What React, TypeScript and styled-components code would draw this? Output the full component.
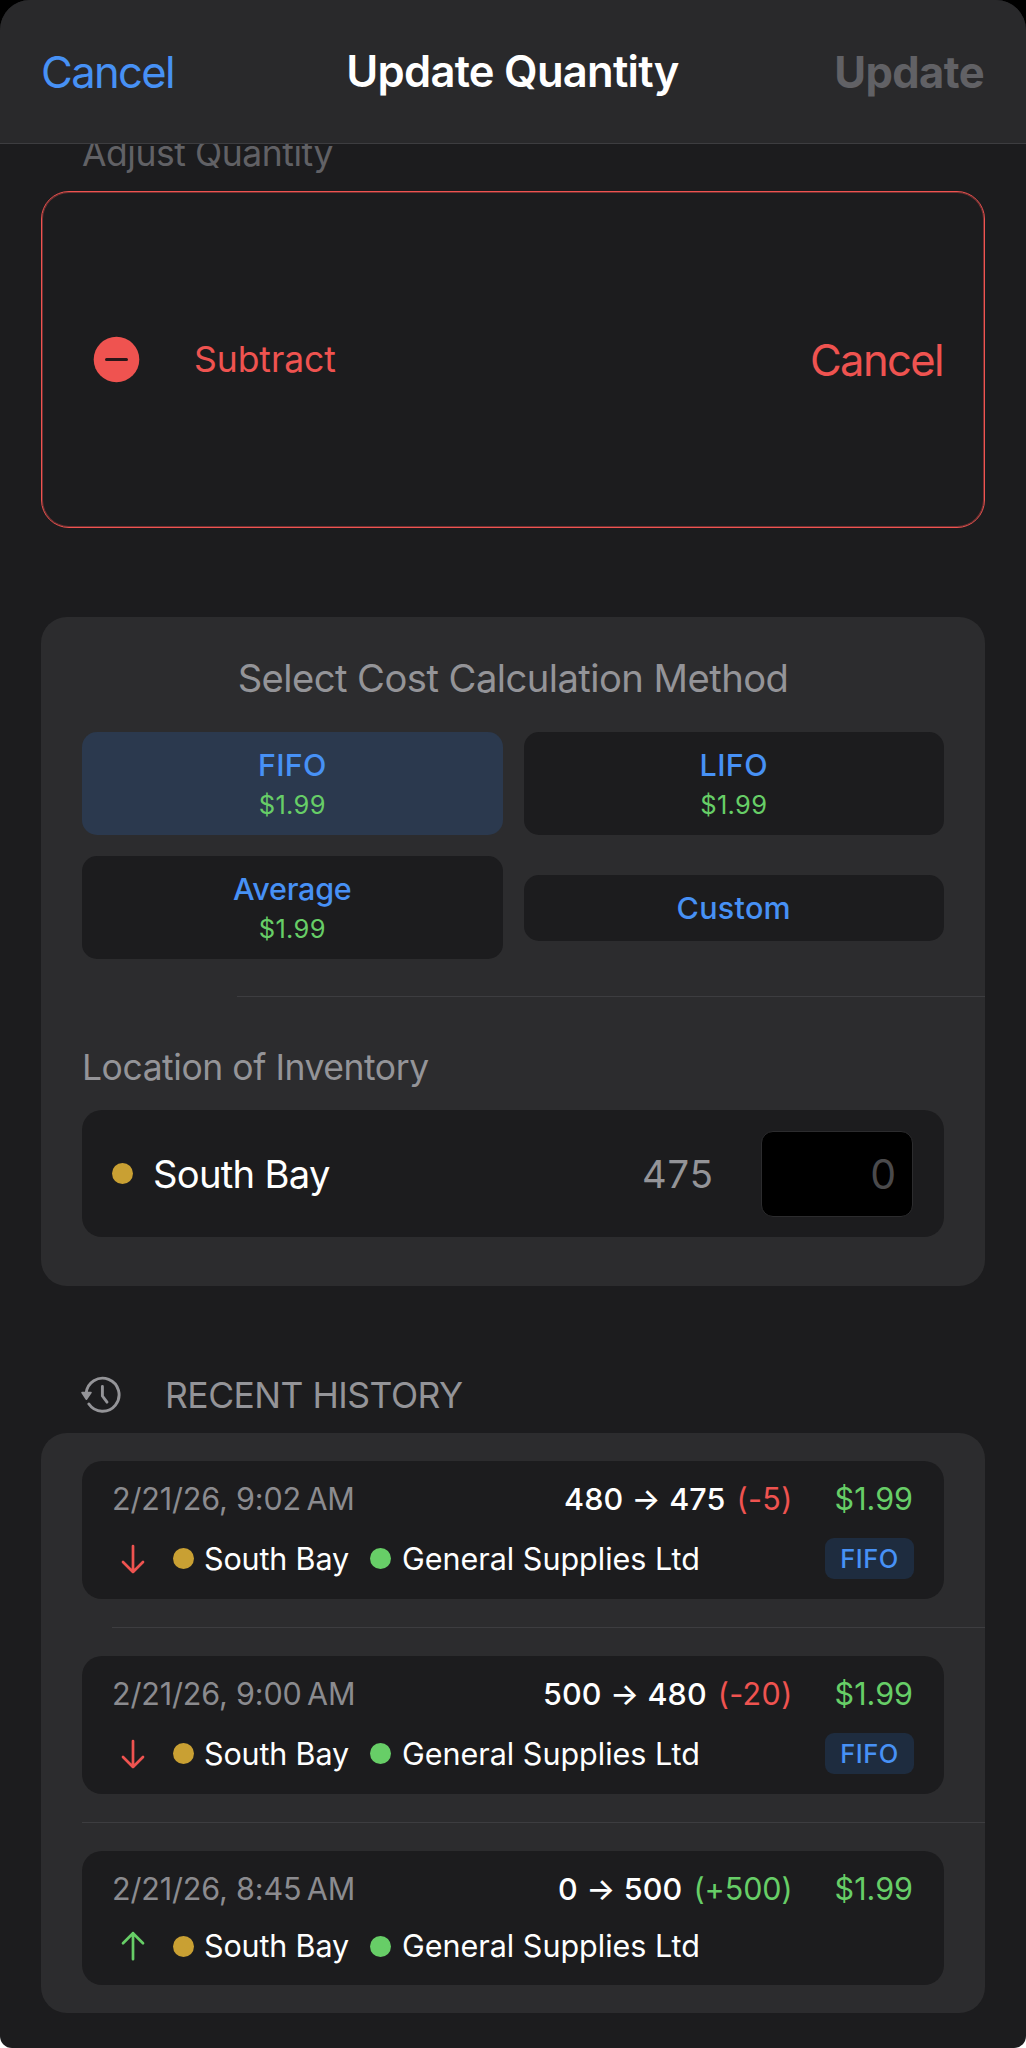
import React from "react";
import styled, { createGlobalStyle } from "styled-components";

const color = {
  sheet: "#1c1c1e",
  header: "#29292b",
  card: "#2c2c2e",
  line: "#3d3d40",
  blue: "#4791f5",
  green: "#67ce67",
  red: "#ef5350",
  gold: "#c9a033",
  grey: "#949498",
  dim: "#616165",
};

const GlobalStyle = createGlobalStyle`
  *, *::before, *::after { box-sizing: border-box; }
  body {
    margin: 0;
    background: linear-gradient(#000 0 50%, #fff 50%);
    font-family: Inter, "Liberation Sans", sans-serif;
  }
  button, input { font: inherit; margin: 0; border: 0; background: none; padding: 0; }
  h1, h2, p { margin: 0; font-weight: 400; }
`;

const Sheet = styled.main`
  width: 1026px;
  height: 2048px;
  overflow: hidden;
  border-radius: 30px 30px 12px 12px;
  background: ${color.sheet};
`;

const Header = styled.header`
  position: relative;
  z-index: 1;
  display: grid;
  grid-template-columns: 1fr auto 1fr;
  align-items: center;
  height: 144px;
  padding: 1px 42px 0 41px;
  background: ${color.header};
  border-bottom: 1px solid ${color.line};
`;

const Title = styled.h1`
  padding-bottom: 2px;
  font-size: 43.5px;
  line-height: 54px;
  font-weight: 600;
  letter-spacing: -0.73px;
  color: #fff;
`;

const TextButton = styled.button<{ $tone: string; $bold?: boolean; $end?: boolean }>`
  justify-self: ${(p) => (p.$end ? "end" : "start")};
  font-size: 43.5px;
  line-height: 54px;
  font-weight: ${(p) => (p.$bold ? 700 : 400)};
  letter-spacing: ${(p) => (p.$bold ? "-0.6px" : "-1.6px")};
  color: ${(p) => p.$tone};
`;

const Content = styled.div`
  padding: 0 41px;
`;

const SectionLabel = styled.p<{ $tone?: string }>`
  font-size: 35.5px;
  line-height: 40px;
  letter-spacing: -0.45px;
  color: ${(p) => p.$tone ?? color.grey};
`;

const ClippedLabel = styled(SectionLabel)`
  margin: -10px 0 17px 41px;
`;

const AdjustCard = styled.section`
  display: flex;
  align-items: center;
  height: 337px;
  padding: 0 41px 0 51px;
  border: 1px solid ${color.red};
  border-radius: 28px;
  box-shadow: inset 0 0 0 1px rgba(239, 83, 80, 0.4);
`;

const AdjustName = styled.span`
  flex: 1;
  margin-left: 54px;
  font-size: 35.5px;
  line-height: 40px;
  letter-spacing: -0.05px;
  color: ${color.red};
`;

const Card = styled.section`
  display: flex;
  flex-direction: column;
  border-radius: 26px;
  background: ${color.card};
`;

const CostCard = styled(Card)`
  margin-top: 89px;
  padding: 38px 0 49px;
`;

const CardTitle = styled.h2`
  text-align: center;
  font-size: 38.2px;
  line-height: 46px;
  letter-spacing: -0.55px;
  color: ${color.grey};
`;

const MethodGrid = styled.div`
  display: grid;
  grid-template-columns: 1fr 1fr;
  align-items: center;
  gap: 21px;
  margin: 31px 41px 0;
`;

const Method = styled.button<{ $selected?: boolean }>`
  display: flex;
  flex-direction: column;
  align-items: center;
  gap: 6px;
  padding: 14px 0 15px;
  border-radius: 15px;
  background: ${(p) => (p.$selected ? "#2b394e" : color.sheet)};
`;

const MethodName = styled.span<{ $spacing: number }>`
  font-size: 30.5px;
  line-height: 37px;
  font-weight: 500;
  letter-spacing: ${(p) => p.$spacing}px;
  color: ${color.blue};
`;

const MethodPrice = styled.span`
  font-size: 25.5px;
  line-height: 31px;
  letter-spacing: 0.3px;
  color: ${color.green};
`;

const Divider = styled.hr<{ $inset: number; $gap: number }>`
  width: auto;
  height: 1px;
  margin: ${(p) => p.$gap}px 0 ${(p) => p.$gap}px ${(p) => p.$inset}px;
  border: 0;
  background: ${color.line};
`;

const LocationLabel = styled(SectionLabel)`
  margin: 14px 41px 22px;
`;

const LocationRow = styled.div`
  display: flex;
  align-items: center;
  height: 127px;
  margin: 0 41px;
  padding: 0 31px 0 30px;
  border-radius: 20px;
  background: ${color.sheet};
`;

const Dot = styled.span<{ $tone: string }>`
  flex: none;
  width: 21px;
  height: 21px;
  border-radius: 50%;
  background: ${(p) => p.$tone};
`;

const LocationName = styled.span`
  flex: 1;
  margin-left: 20px;
  font-size: 38.2px;
  line-height: 46px;
  letter-spacing: -0.72px;
  color: #fff;
`;

const Stock = styled.span`
  margin-right: 47px;
  font-size: 38.2px;
  line-height: 46px;
  letter-spacing: 1px;
  color: ${color.grey};
`;

const QuantityBox = styled.input`
  width: 152px;
  height: 86px;
  padding: 0 16px 0 0;
  border: 1px solid #2c2c2e;
  border-radius: 12px;
  background: #000;
  text-align: right;
  font-size: 41px;
  &::placeholder { color: #4a4a4c; opacity: 1; }
`;

const HistoryHeader = styled.div`
  display: flex;
  align-items: center;
  height: 40px;
  margin: 89px 0 18px 38px;
`;

const HistoryTitle = styled.h2`
  margin-left: 42px;
  padding-top: 2px;
  font-size: 35.5px;
  line-height: 40px;
  letter-spacing: -0.52px;
  color: ${color.grey};
`;

const HistoryCard = styled(Card)`
  padding: 28px 0;
`;

const Entry = styled.article<{ $compact?: boolean }>`
  display: flex;
  flex-direction: column;
  gap: ${(p) => (p.$compact ? 19 : 20)}px;
  margin: 0 41px;
  padding: 19px 31px 20px 30px;
  border-radius: 20px;
  background: ${color.sheet};
`;

const EntryLine = styled.div`
  display: flex;
  align-items: center;
  font-size: 30.5px;
  line-height: 38px;
  color: #fff;
`;

const When = styled.time`
  flex: 1;
  letter-spacing: -0.15px;
  color: #8b8b8f;
`;

const Change = styled.span`
  font-weight: 500;
  letter-spacing: 0.15px;
  white-space: pre;
`;

const Delta = styled.span<{ $tone: string; $spacing: number }>`
  margin: 0 42px 0 11px;
  letter-spacing: ${(p) => p.$spacing}px;
  color: ${(p) => p.$tone};
`;

const Price = styled.span`
  letter-spacing: 0;
  color: ${color.green};
`;

const Place = styled.span`
  margin: 0 21px 0 10px;
  letter-spacing: -0.15px;
`;

const Supplier = styled.span`
  flex: 1;
  margin-left: 11px;
`;

const Badge = styled.span`
  width: 89px;
  margin-right: -1px;
  border-radius: 9px;
  background: #1e2c3f;
  text-align: center;
  font-size: 25.5px;
  line-height: 41px;
  font-weight: 500;
  letter-spacing: 0.5px;
  color: ${color.blue};
`;

const DirectionSvg = styled.svg`
  flex: none;
  margin-right: 19px;
`;

const MinusIcon = () => (
  <svg width="47" height="47" viewBox="0 0 47 47">
    <circle cx="23.5" cy="23.5" r="22.8" fill={color.red} />
    <path d="M13.5 23.5h20" stroke="#2a1719" strokeWidth="3" strokeLinecap="round" />
  </svg>
);

const HistoryIcon = () => (
  <svg width="44" height="40" viewBox="0 0 44 40" fill="none" stroke={color.grey} strokeWidth="2.9" strokeLinecap="round" strokeLinejoin="round">
    <path d="M7.1 18.5A16.5 16.5 0 1 1 9.9 29" />
    <path d="M23.4 11.5V21l4.6 6.2" />
    <path d="M3 17.6h9L7.4 24.2Z" fill={color.grey} strokeWidth="1.6" />
  </svg>
);

const DirectionIcon = ({ up }: { up: boolean }) => (
  <DirectionSvg width="42" height="34" viewBox="0 0 42 34" fill="none" stroke={up ? color.green : color.red} strokeWidth="2.7" strokeLinecap="round" strokeLinejoin="round">
    <path d={up ? "M21 30.2V4.2M11 14.2l10-10 10 10" : "M21 4v26M11 20l10 10 10-10"} />
  </DirectionSvg>
);

const methods = [
  { name: "FIFO", price: "$1.99", spacing: 0.2, selected: true },
  { name: "LIFO", price: "$1.99", spacing: 0.4 },
  { name: "Average", price: "$1.99", spacing: -0.25 },
  { name: "Custom", spacing: 0.3 },
];

const history = [
  { when: "2/21/26, 9:02\u202fAM", change: "480 → 475", delta: "(-5)", spacing: 0.3, up: false, method: "FIFO" },
  { when: "2/21/26, 9:00\u202fAM", change: "500 → 480", delta: "(-20)", spacing: 0.35, up: false, method: "FIFO" },
  { when: "2/21/26, 8:45\u202fAM", change: "0 → 500", delta: "(+500)", spacing: -0.05, up: true },
];

const dividerInsets = [71, 41];

export default function App() {
  return (
    <>
      <GlobalStyle />
      <Sheet>
        <Header>
          <TextButton $tone={color.blue}>Cancel</TextButton>
          <Title>Update Quantity</Title>
          <TextButton $tone={color.dim} $bold $end>Update</TextButton>
        </Header>
        <Content>
          <ClippedLabel $tone={color.dim}>Adjust Quantity</ClippedLabel>
          <AdjustCard>
            <MinusIcon />
            <AdjustName>Subtract</AdjustName>
            <TextButton $tone={color.red}>Cancel</TextButton>
          </AdjustCard>

          <CostCard>
            <CardTitle>Select Cost Calculation Method</CardTitle>
            <MethodGrid>
              {methods.map((m) => (
                <Method key={m.name} $selected={m.selected}>
                  <MethodName $spacing={m.spacing}>{m.name}</MethodName>
                  {m.price && <MethodPrice>{m.price}</MethodPrice>}
                </Method>
              ))}
            </MethodGrid>
            <Divider $inset={196} $gap={37} />
            <LocationLabel>Location of Inventory</LocationLabel>
            <LocationRow>
              <Dot $tone={color.gold} />
              <LocationName>South Bay</LocationName>
              <Stock>475</Stock>
              <QuantityBox placeholder="0" aria-label="Quantity" />
            </LocationRow>
          </CostCard>

          <HistoryHeader>
            <HistoryIcon />
            <HistoryTitle>RECENT HISTORY</HistoryTitle>
          </HistoryHeader>
          <HistoryCard>
            {history.map((h, i) => (
              <React.Fragment key={h.when}>
                {i > 0 && <Divider $inset={dividerInsets[i - 1]} $gap={28} />}
                <Entry $compact={!h.method}>
                  <EntryLine>
                    <When>{h.when}</When>
                    <Change>{h.change}</Change>
                    <Delta $tone={h.up ? color.green : color.red} $spacing={h.spacing}>{h.delta}</Delta>
                    <Price>$1.99</Price>
                  </EntryLine>
                  <EntryLine>
                    <DirectionIcon up={h.up} />
                    <Dot $tone={color.gold} />
                    <Place>South Bay</Place>
                    <Dot $tone={color.green} />
                    <Supplier>General Supplies Ltd</Supplier>
                    {h.method && <Badge>{h.method}</Badge>}
                  </EntryLine>
                </Entry>
              </React.Fragment>
            ))}
          </HistoryCard>
        </Content>
      </Sheet>
    </>
  );
}
